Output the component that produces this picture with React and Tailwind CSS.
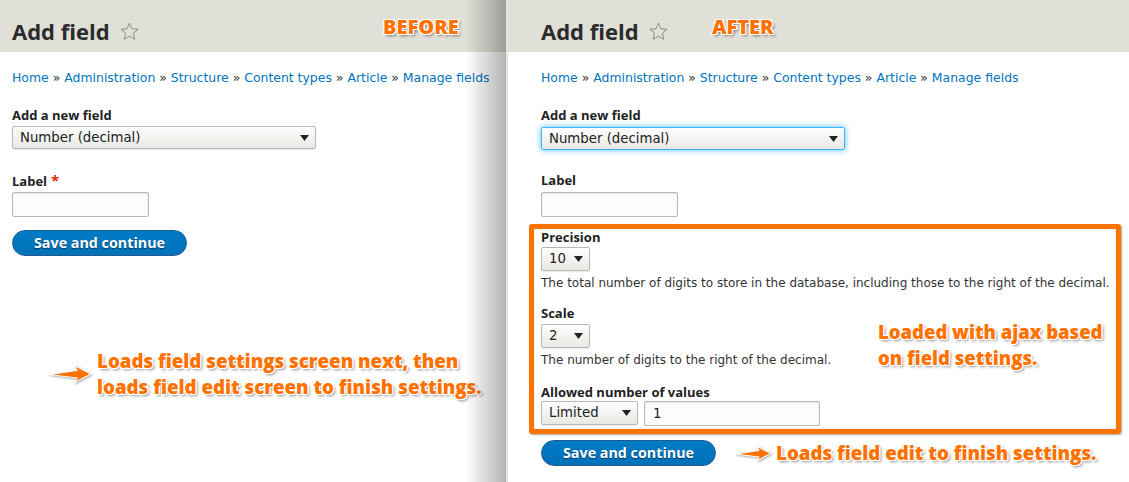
import React from "react";

const ui = "font-['DejaVu_Sans',sans-serif]";
const bold = "font-['Open_Sans',sans-serif] font-bold";
const note =
  "font-['Open_Sans',sans-serif] font-extrabold whitespace-nowrap text-[#ff7100] [text-shadow:1px_1px_0_#fff,-1px_-1px_0_#fff,1px_-1px_0_#fff,-1px_1px_0_#fff,0_1px_0_#fff,0_-1px_0_#fff,1px_0_0_#fff,-1px_0_0_#fff,2px_2px_3px_rgba(0,0,0,0.45)]";

function Star() {
  return (
    <svg width="19" height="19" viewBox="0 0 20 20" className="shrink-0">
      <polygon
        points="10,1.2 12.6,7.2 19,7.6 14.1,11.8 15.6,18.3 10,14.9 4.4,18.3 5.9,11.8 1,7.6 7.4,7.2"
        fill="none"
        stroke="#8a8a74"
        strokeWidth="1"
        strokeLinejoin="round"
      />
    </svg>
  );
}

function Caret() {
  return (
    <svg width="9" height="6" viewBox="0 0 9 6" className="shrink-0">
      <polygon points="0,0 9,0 4.5,6" fill="#222" />
    </svg>
  );
}

function Arrow({ w = 42, h = 20 }) {
  return (
    <svg width={w} height={h} viewBox="0 0 44 20" className="shrink-0 drop-shadow-[1px_1px_1px_rgba(0,0,0,0.35)]">
      <path
        d="M1 10.5 L29 6.5 L26.5 1.5 L43 10 L26.5 18.5 L29 14 Z"
        fill="#ff7100"
        stroke="#fff"
        strokeWidth="1.2"
        strokeLinejoin="round"
      />
    </svg>
  );
}

function Header({ children }) {
  return (
    <div className="relative h-[52px] bg-[#e0e0d8] flex items-center pt-[10px] gap-[10px]">
      <h1 className={`${bold} text-[22px] leading-none text-[#2b2b2b]`}>Add field</h1>
      <Star />
      {children}
    </div>
  );
}

function Breadcrumb() {
  const items = ["Home", "Administration", "Structure", "Content types", "Article", "Manage fields"];
  return (
    <div className={`${ui} text-[12.45px] leading-[18px] text-[#0074bd] whitespace-nowrap`}>
      {items.map((t, i) => (
        <React.Fragment key={t}>
          {i > 0 && <span className="text-[#333]"> » </span>}
          <span>{t}</span>
        </React.Fragment>
      ))}
    </div>
  );
}

function Label({ children, req }) {
  return (
    <div className={`${bold} text-[13px] leading-[16px] text-[#222]`}>
      {children}
      {req && <span className="text-[#e62600] ml-[4px] text-[15px]">*</span>}
    </div>
  );
}

function Select({ value, w, h = 24, focus }) {
  return (
    <div
      className={`${ui} flex items-center justify-between rounded-[2px] border text-[13.3px] text-[#222] pl-[7px] pr-[6px] bg-gradient-to-b from-[#fefefe] to-[#e8e8e4] ${
        focus
          ? "border-[#40b6ff] shadow-[0_0_6px_rgba(64,182,255,0.9)]"
          : "border-[#b8b8b8] shadow-[0_1px_1px_rgba(0,0,0,0.08)]"
      }`}
      style={{ width: w, height: h }}
    >
      <span>{value}</span>
      <Caret />
    </div>
  );
}

function Input({ w, value }) {
  return (
    <div
      className={`${ui} flex items-center rounded-[2px] border border-[#b8b8b8] bg-[#fcfcfa] shadow-[inset_0_1px_2px_rgba(0,0,0,0.1)] text-[13.3px] text-[#222] pl-[8px] h-[25px]`}
      style={{ width: w }}
    >
      {value}
    </div>
  );
}

function Button() {
  return (
    <div
      className={`${bold} w-[175px] h-[26px] rounded-full border border-[#1e5c90] bg-gradient-to-b from-[#007bc6] to-[#0071b8] text-white text-[14.3px] flex items-center justify-center [text-shadow:0_1px_1px_rgba(0,0,0,0.5)]`}
    >
      Save and continue
    </div>
  );
}

function Desc({ children }) {
  return <div className={`${ui} text-[12px] leading-[16px] text-[#333] whitespace-nowrap`}>{children}</div>;
}

export default function App() {
  return (
    <div className="flex w-[1129px] h-[482px] bg-white overflow-hidden">
      {/* BEFORE */}
      <div className="relative w-[506px] shrink-0 flex flex-col">
        <div className="pl-[12px] bg-[#e0e0d8]">
          <Header>
            <span className={`${note} absolute left-[371px] top-[16px] text-[20px] leading-[22px]`}>BEFORE</span>
          </Header>
        </div>
        <div className="pl-[12px] flex flex-col">
          <div className="mt-[17px]">
            <Breadcrumb />
          </div>
          <div className="mt-[20px]">
            <Label>Add a new field</Label>
          </div>
          <div className="mt-[3px]">
            <Select value="Number (decimal)" w={304} h={23} />
          </div>
          <div className="mt-[23px]">
            <Label req>Label</Label>
          </div>
          <div className="mt-[3px]">
            <Input w={137} />
          </div>
          <div className="mt-[13px]">
            <Button />
          </div>
          <div className="mt-[92px] ml-[36px] flex items-center gap-[5px]">
            <Arrow w={44} h={20} />
            <div className={`${note} text-[18.7px] leading-[26px]`}>
              Loads field settings screen next, then
              <br />
              loads field edit screen to finish settings.
            </div>
          </div>
        </div>
        <div className="absolute top-0 right-0 h-full w-[40px] bg-gradient-to-r from-transparent to-black/30 pointer-events-none" />
      </div>
      <div className="w-[2px] shrink-0 bg-[#e4e4e4]" />

      {/* AFTER */}
      <div className="flex-1 flex flex-col">
        <div className="pl-[33px] bg-[#e0e0d8]">
          <Header>
            <span className={`${note} absolute left-[171px] top-[16px] text-[20px] leading-[22px]`}>AFTER</span>
          </Header>
        </div>
        <div className="pl-[21px] pr-[8px] flex flex-col">
          <div className="pl-[12px] mt-[17px]">
            <Breadcrumb />
          </div>
          <div className="pl-[12px] mt-[20px]">
            <Label>Add a new field</Label>
          </div>
          <div className="pl-[12px] mt-[4px]">
            <Select value="Number (decimal)" w={304} h={23} focus />
          </div>
          <div className="pl-[12px] mt-[22px]">
            <Label>Label</Label>
          </div>
          <div className="pl-[12px] mt-[4px]">
            <Input w={137} />
          </div>
          <div className="relative mt-[7px] border-[5px] border-[#ff7400] rounded-[3px] shadow-[1px_1px_2px_rgba(0,0,0,0.35),inset_0_0_1px_rgba(0,0,0,0.4)] pl-[7px] pt-[0px] pb-[3px] flex flex-col">
            <Label>Precision</Label>
            <div className="mt-[2px]">
              <Select value="10" w={49} />
            </div>
            <div className="mt-[4px]">
              <Desc>The total number of digits to store in the database, including those to the right of the decimal.</Desc>
            </div>
            <div className="mt-[14px]">
              <Label>Scale</Label>
            </div>
            <div className="mt-[3px]">
              <Select value="2" w={49} />
            </div>
            <div className="mt-[4px]">
              <Desc>The number of digits to the right of the decimal.</Desc>
            </div>
            <div className="mt-[16px]">
              <Label>Allowed number of values</Label>
            </div>
            <div className="mt-[1px] flex gap-[6px]">
              <Select value="Limited" w={97} />
              <Input w={176} value="1" />
            </div>
            <div className={`${note} absolute left-[344px] top-[90px] text-[18.5px] leading-[26px]`}>
              Loaded with ajax based
              <br />
              on field settings.
            </div>
          </div>
          <div className="pl-[12px] mt-[6px] flex items-center">
            <Button />
            <div className="ml-[18px] flex items-center gap-[4px]">
              <Arrow w={38} h={17} />
              <span className={`${note} text-[18.7px] leading-[26px]`}>Loads field edit to finish settings.</span>
            </div>
          </div>
        </div>
      </div>
    </div>
  );
}
